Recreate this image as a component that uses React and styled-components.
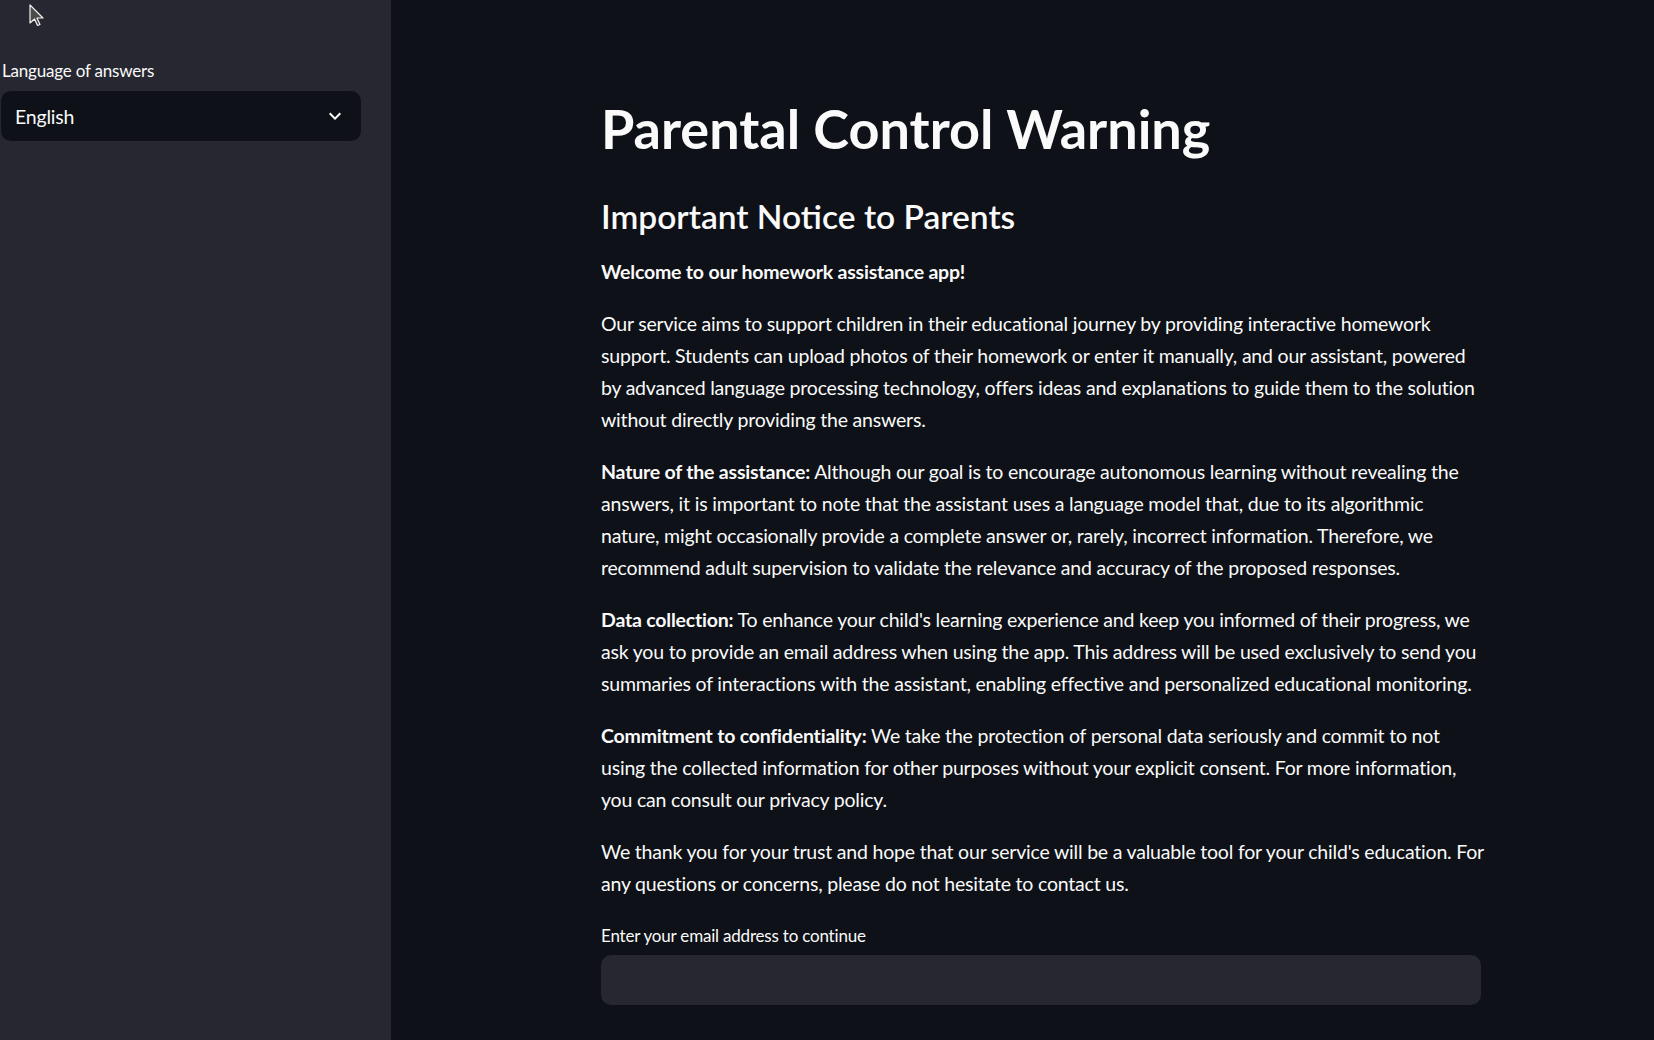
import styled, { createGlobalStyle } from 'styled-components'

const GlobalStyle = createGlobalStyle`
  * { box-sizing: border-box; }
  html, body {
    margin: 0;
    padding: 0;
    background: #0e1117;
  }
  body {
    font-family: Lato, 'Liberation Sans', sans-serif;
    color: #fafafa;
    -webkit-font-smoothing: antialiased;
  }
`

const Page = styled.div`
  position: relative;
  display: flex;
  height: 100vh;
  overflow: hidden;
`

const Sidebar = styled.aside`
  width: 391px;
  flex-shrink: 0;
  background: #262730;
  padding: 57px 30px 0 1px;
`

const Main = styled.main`
  flex: 1;
  padding: 96px 0 0 210px;
`

const Content = styled.div`
  width: 880px;
`

// sidebar label vs. the field label under the text: wide = main column
const Label = styled.div`
  font-size: 17px;
  line-height: 28px;
  letter-spacing: -0.2px;
  margin: ${props => (props.wide ? '0 0 5px' : '0 0 6px')};
  padding: ${props => (props.wide ? '2px 0 0 0' : '0 0 0 1px')};
  white-space: nowrap;
`

const Select = styled.div`
  height: 50px;
  display: flex;
  align-items: center;
  justify-content: space-between;
  padding: 0 14px;
  background: #0e1117;
  border-radius: 10px;
  font-size: 19.5px;
  letter-spacing: -0.2px;
`

const Title = styled.h1`
  margin: 0;
  font-size: 54px;
  line-height: 66px;
  font-weight: 700;
`

const Subtitle = styled.h2`
  margin: 32px 0 18px;
  font-size: 33.5px;
  line-height: 44px;
  font-weight: 600;
`

const Para = styled.p`
  margin: 0 0 20px;
  font-size: 19.5px;
  line-height: 32px;
  letter-spacing: -0.2px;
  white-space: nowrap;
`

const Strong = styled.strong`
  font-weight: 700;
`

const TextInput = styled.div`
  height: 50px;
  border-radius: 10px;
  background: #262730;
`

const Cursor = styled.svg`
  position: absolute;
  left: 29px;
  top: 4px;
`

const ChevronDown = () => (
  <svg width='24' height='24' viewBox='0 0 24 24' fill='#fafafa'>
    <path d='M16.59 8.59 12 13.17 7.41 8.59 6 10l6 6 6-6z' />
  </svg>
)

const paragraphs = [
  {
    lead: null,
    lines: [
      'Our service aims to support children in their educational journey by providing interactive homework',
      'support. Students can upload photos of their homework or enter it manually, and our assistant, powered',
      'by advanced language processing technology, offers ideas and explanations to guide them to the solution',
      'without directly providing the answers.'
    ]
  },
  {
    lead: 'Nature of the assistance:',
    lines: [
      ' Although our goal is to encourage autonomous learning without revealing the',
      'answers, it is important to note that the assistant uses a language model that, due to its algorithmic',
      'nature, might occasionally provide a complete answer or, rarely, incorrect information. Therefore, we',
      'recommend adult supervision to validate the relevance and accuracy of the proposed responses.'
    ]
  },
  {
    lead: 'Data collection:',
    lines: [
      " To enhance your child's learning experience and keep you informed of their progress, we",
      'ask you to provide an email address when using the app. This address will be used exclusively to send you',
      'summaries of interactions with the assistant, enabling effective and personalized educational monitoring.'
    ]
  },
  {
    lead: 'Commitment to confidentiality:',
    lines: [
      ' We take the protection of personal data seriously and commit to not',
      'using the collected information for other purposes without your explicit consent. For more information,',
      'you can consult our privacy policy.'
    ]
  },
  {
    lead: null,
    lines: [
      "We thank you for your trust and hope that our service will be a valuable tool for your child's education. For",
      'any questions or concerns, please do not hesitate to contact us.'
    ]
  }
]

const Paragraph = ({ lead, lines }) => (
  <Para>
    {lead && <Strong>{lead}</Strong>}
    {lines.map((line, i) => (
      <span key={i}>
        {i > 0 && <br />}
        {line}
      </span>
    ))}
  </Para>
)

export default function App() {
  return (
    <Page>
      <GlobalStyle />
      <Sidebar>
        <Label>Language of answers</Label>
        <Select>
          <span>English</span>
          <ChevronDown />
        </Select>
      </Sidebar>
      <Main>
        <Content>
          <Title>Parental Control Warning</Title>
          <Subtitle>Important Notice to Parents</Subtitle>
          <Para>
            <Strong>Welcome to our homework assistance app!</Strong>
          </Para>
          {paragraphs.map((p, i) => (
            <Paragraph key={i} lead={p.lead} lines={p.lines} />
          ))}
          <Label wide>Enter your email address to continue</Label>
          <TextInput />
        </Content>
      </Main>
      <Cursor width='16' height='24' viewBox='0 0 16 24'>
        <path
          d='M1 1 L1 19 L5.5 15 L8.5 21.5 L11 20.5 L8 14 L14 14 Z'
          fill='#4a4a4a'
          stroke='#f0f0f0'
          strokeWidth='1.2'
          strokeLinejoin='round'
        />
      </Cursor>
    </Page>
  )
}
